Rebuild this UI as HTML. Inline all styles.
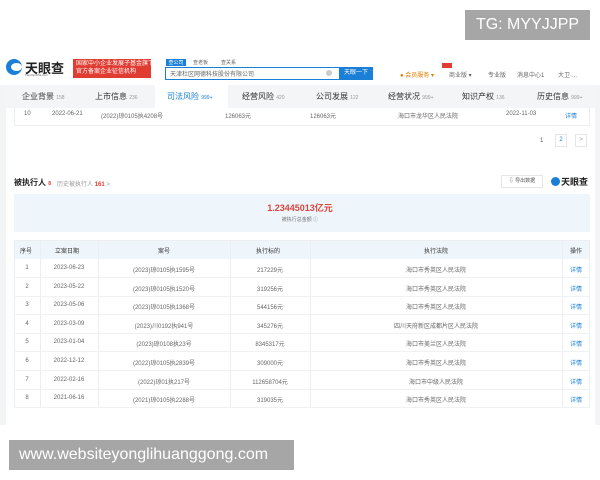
<!DOCTYPE html>
<html><head><meta charset="utf-8"><style>
*{margin:0;padding:0;box-sizing:border-box}
body{width:600px;height:480px;background:#fff;font-family:"Liberation Sans","Noto Sans CJK SC",sans-serif;position:relative;overflow:hidden;color:#555}
.a{position:absolute;white-space:nowrap}
.s{font-size:6px;color:#666}
</style></head><body>
<div class="a" style="left:465px;top:10px;width:125px;height:30px;background:#a6a6a6;color:#fff;font-size:16px;line-height:30px;text-align:center">TG: MYYJJPP</div>

<!-- header -->
<div class="a" style="left:6px;top:59px;width:16px;height:16px;border-radius:50%;background:#1a7fd6"></div>
<div class="a" style="left:11px;top:63px;width:11px;height:8px;border-radius:50%;background:#fff"></div>
<div class="a" style="left:25px;top:58px;font-size:13px;color:#222;font-weight:bold">天眼查</div>
<div class="a" style="left:25px;top:73px;font-size:3px;color:#555">TianYanCha.com</div>
<div class="a" style="left:73px;top:59px;width:78px;height:19px;background:#e03c31;color:#fff;font-size:6px;line-height:8px;padding:1px 3px">国家中小企业发展子基金旗下<br>官方备案企业征信机构</div>
<div class="a" style="left:166px;top:59px;width:20px;height:7px;background:#1a7fd6;color:#fff;font-size:5px;text-align:center">查公司</div>
<div class="a s" style="left:193px;top:59px;font-size:5px">查老板</div>
<div class="a s" style="left:221px;top:59px;font-size:5px">查关系</div>
<div class="a" style="left:165px;top:67px;width:208px;height:13px;border:1px solid #1a7fd6;background:#fff"></div>
<div class="a s" style="left:170px;top:69px">天津杜区网德科技股份有限公司</div>
<div class="a" style="left:326px;top:70px;width:6px;height:6px;border-radius:50%;background:#ccc"></div>
<div class="a" style="left:339px;top:67px;width:34px;height:13px;background:#1a7fd6;color:#fff;font-size:6px;line-height:13px;text-align:center">天眼一下</div>
<div class="a" style="left:400px;top:70px;font-size:6px;color:#e07b00">● 会员服务 ▾</div>
<div class="a" style="left:442px;top:63px;width:10px;height:5px;background:#e03c31"></div>
<div class="a s" style="left:449px;top:70px">商业版 ▾</div>
<div class="a s" style="left:488px;top:70px">专业版</div>
<div class="a s" style="left:517px;top:70px">消息中心1</div>
<div class="a s" style="left:558px;top:70px">大卫·...</div>

<!-- side margins -->
<div class="a" style="left:0;top:85px;width:6px;height:340px;background:#f3f4f6"></div>
<div class="a" style="left:595px;top:85px;width:5px;height:340px;background:#f3f4f6"></div>

<!-- tabs -->
<div class="a" style="left:6px;top:85px;width:589px;height:23px;background:#f4f5f7"></div>
<div class="a" style="left:155px;top:85px;width:73px;height:23px;background:#fff"></div>
<div class="a" style="left:22px;top:91px;font-size:8px;color:#333">企业背景 <span style="font-size:5px;color:#999">158</span></div>
<div class="a" style="left:95px;top:91px;font-size:8px;color:#333">上市信息 <span style="font-size:5px;color:#999">236</span></div>
<div class="a" style="left:167px;top:91px;font-size:8px;color:#1a7fd6">司法风险 <span style="font-size:5px">999+</span></div>
<div class="a" style="left:242px;top:91px;font-size:8px;color:#333">经营风险 <span style="font-size:5px;color:#999">420</span></div>
<div class="a" style="left:316px;top:91px;font-size:8px;color:#333">公司发展 <span style="font-size:5px;color:#999">122</span></div>
<div class="a" style="left:388px;top:91px;font-size:8px;color:#333">经营状况 <span style="font-size:5px;color:#999">999+</span></div>
<div class="a" style="left:462px;top:91px;font-size:8px;color:#333">知识产权 <span style="font-size:5px;color:#999">136</span></div>
<div class="a" style="left:537px;top:91px;font-size:8px;color:#333">历史信息 <span style="font-size:5px;color:#999">999+</span></div>

<!-- previous row -->
<div class="a" style="left:14px;top:108px;width:576px;height:18px;border-bottom:1px solid #eee;border-left:1px solid #eee;border-right:1px solid #eee"></div>
<div class="a s" style="left:24px;top:111px">10</div>
<div class="a s" style="left:52px;top:111px">2022-06-21</div>
<div class="a s" style="left:101px;top:111px">(2022)琼0105执4208号</div>
<div class="a s" style="left:225px;top:111px">126063元</div>
<div class="a s" style="left:310px;top:111px">126063元</div>
<div class="a s" style="left:398px;top:111px">海口市龙华区人民法院</div>
<div class="a s" style="left:506px;top:111px">2022-11-03</div>
<div class="a s" style="left:565px;top:111px;color:#1a7fd6">详情</div>

<div class="a s" style="left:540px;top:138px">1</div>
<div class="a" style="left:555px;top:134px;width:12px;height:13px;border:1px solid #e6e6e6;font-size:6px;color:#1a7fd6;text-align:center;line-height:11px">2</div>
<div class="a" style="left:575px;top:134px;width:12px;height:13px;border:1px solid #e6e6e6;font-size:6px;color:#999;text-align:center;line-height:11px">&gt;</div>

<!-- section -->
<div class="a" style="left:14px;top:177px;font-size:8px;color:#222;font-weight:bold">被执行人 <span style="color:#e03c31;font-size:5px">8</span></div>
<div class="a" style="left:57px;top:179px;font-size:6px;color:#999">历史被执行人 <b style="color:#e03c31">161</b> &gt;</div>
<div class="a" style="left:501px;top:175px;width:42px;height:13px;border:1px solid #e6e6e6;font-size:5px;color:#555;text-align:center;line-height:11px">⇩ 导出数据</div>
<div class="a" style="left:551px;top:177px;width:9px;height:9px;border-radius:50%;background:#1a7fd6"></div>
<div class="a" style="left:561px;top:175px;font-size:9px;color:#222;font-weight:bold">天眼查</div>

<div class="a" style="left:14px;top:194px;width:576px;height:38px;background:#eef5fb"></div>
<div class="a" style="left:0;width:600px;top:201px;text-align:center;font-size:9px;color:#d9463e;font-weight:bold">1.23445013亿元</div>
<div class="a" style="left:0;width:600px;top:216px;text-align:center;font-size:5px;color:#777">被执行总金额 ⓘ</div>

<!-- table -->
<div class="a" style="left:14px;top:240px;width:576px;height:19px;background:#eef5fb"></div>
<div class="a" style="left:14px;top:240px;width:576px;height:168px;border:1px solid #eceef1"></div>
<div class="a" style="left:40px;top:240px;width:1px;height:168px;background:#eceef1"></div>
<div class="a" style="left:98px;top:240px;width:1px;height:168px;background:#eceef1"></div>
<div class="a" style="left:230px;top:240px;width:1px;height:168px;background:#eceef1"></div>
<div class="a" style="left:310px;top:240px;width:1px;height:168px;background:#eceef1"></div>
<div class="a" style="left:562px;top:240px;width:1px;height:168px;background:#eceef1"></div>
<div class="a s" style="left:20px;top:246px;color:#333">序号</div>
<div class="a s" style="left:55px;top:246px;color:#333">立案日期</div>
<div class="a s" style="left:158px;top:246px;color:#333">案号</div>
<div class="a s" style="left:256px;top:246px;color:#333">执行标的</div>
<div class="a s" style="left:424px;top:246px;color:#333">执行法院</div>
<div class="a s" style="left:570px;top:246px;color:#333">操作</div>
<div id="rows"></div>
<script>
var d=[["1","2023-06-23","(2023)琼0105执1595号","217229元","海口市秀英区人民法院"],
["2","2023-05-22","(2023)琼0105执1520号","319256元","海口市秀英区人民法院"],
["3","2023-05-06","(2023)琼0105执1368号","544156元","海口市秀英区人民法院"],
["4","2023-03-09","(2023)川0192执941号","345276元","四川天府新区成都片区人民法院"],
["5","2023-01-04","(2023)琼0108执23号","8345317元","海口市美兰区人民法院"],
["6","2022-12-12","(2022)琼0105执2839号","309000元","海口市秀英区人民法院"],
["7","2022-02-16","(2022)琼01执217号","112658704元","海口市中级人民法院"],
["8","2021-06-16","(2021)琼0105执2288号","319035元","海口市秀英区人民法院"]];
var h="";
for(var i=0;i<8;i++){var y=259+i*18.6;var r=d[i];
h+='<div class="a" style="left:14px;top:'+(y+18)+'px;width:576px;height:1px;background:#f0f1f3"></div>';
h+='<div class="a s" style="left:14px;width:26px;text-align:center;top:'+(y+6)+'px">'+r[0]+'</div>';
h+='<div class="a s" style="left:40px;width:58px;text-align:center;top:'+(y+6)+'px">'+r[1]+'</div>';
h+='<div class="a s" style="left:98px;width:132px;text-align:center;top:'+(y+6)+'px">'+r[2]+'</div>';
h+='<div class="a s" style="left:230px;width:80px;text-align:center;top:'+(y+6)+'px">'+r[3]+'</div>';
h+='<div class="a s" style="left:310px;width:252px;text-align:center;top:'+(y+6)+'px">'+r[4]+'</div>';
h+='<div class="a s" style="left:562px;width:28px;text-align:center;top:'+(y+6)+'px;color:#1a7fd6">详情</div>';}
document.getElementById("rows").innerHTML=h;
</script>

<div class="a" style="left:9px;top:440px;width:285px;height:30px;background:#a6a6a6;color:#fff;font-size:16px;line-height:30px;padding-left:10px">www.websiteyonglihuanggong.com</div>
</body></html>
